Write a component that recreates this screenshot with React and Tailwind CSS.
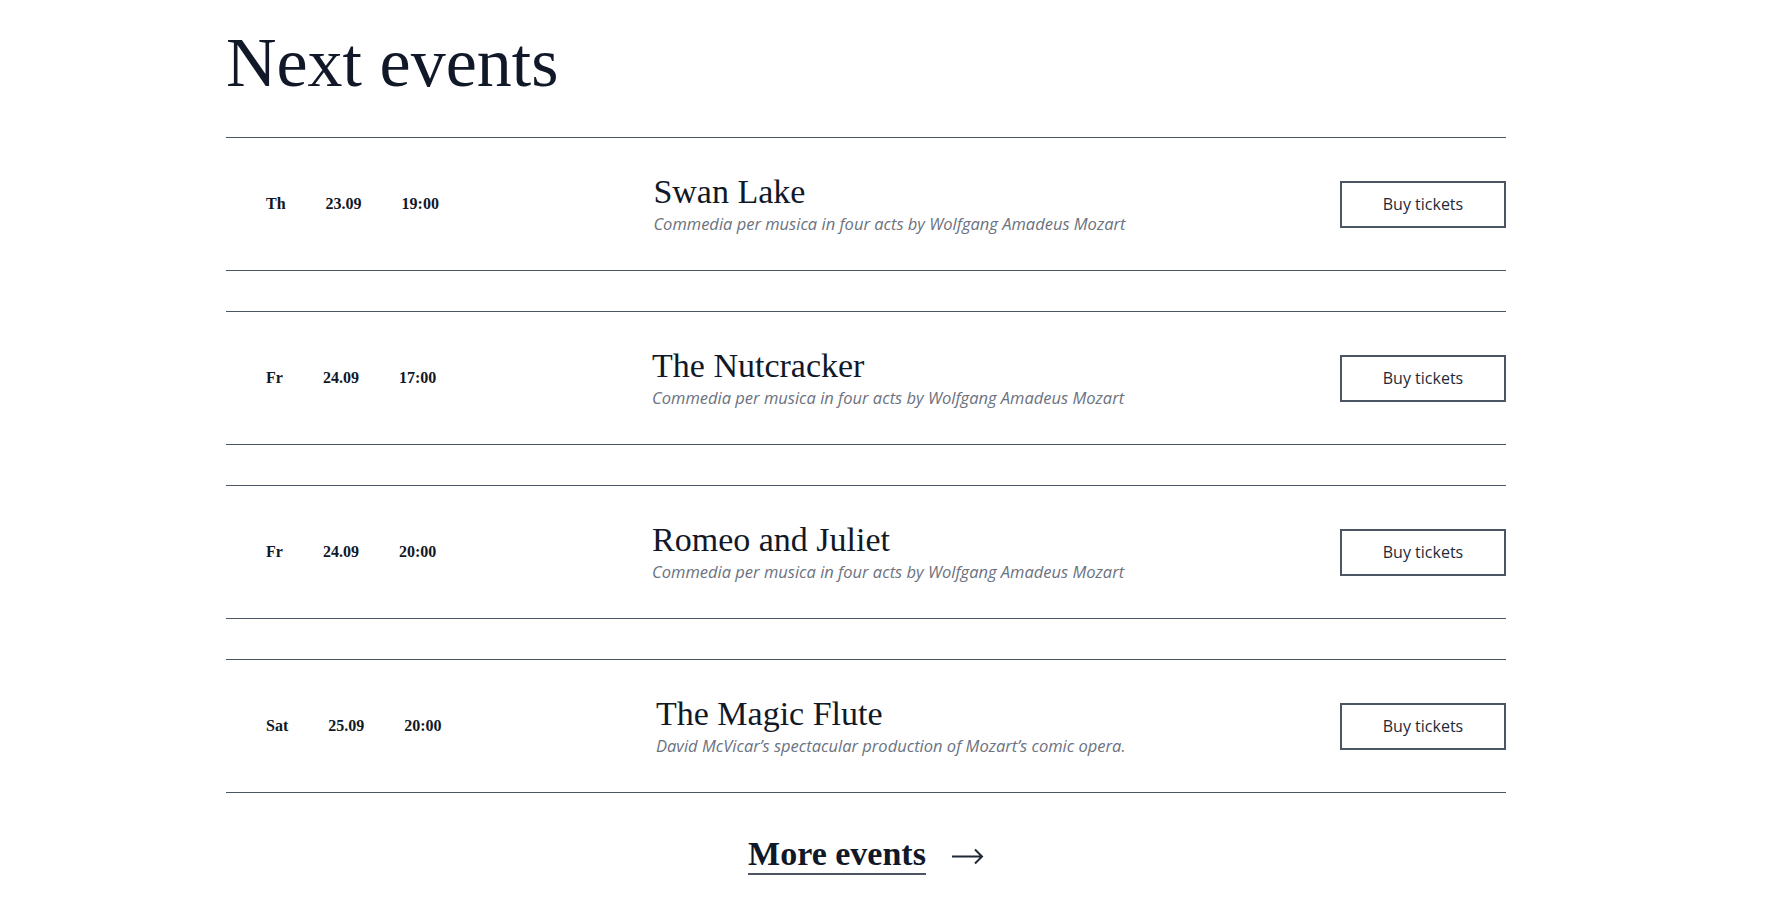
import React from 'react';

const events = [
  {
    day: 'Th',
    date: '23.09',
    time: '19:00',
    title: 'Swan Lake',
    subtitle: 'Commedia per musica in four acts by Wolfgang Amadeus Mozart',
  },
  {
    day: 'Fr',
    date: '24.09',
    time: '17:00',
    title: 'The Nutcracker',
    subtitle: 'Commedia per musica in four acts by Wolfgang Amadeus Mozart',
  },
  {
    day: 'Fr',
    date: '24.09',
    time: '20:00',
    title: 'Romeo and Juliet',
    subtitle: 'Commedia per musica in four acts by Wolfgang Amadeus Mozart',
  },
  {
    day: 'Sat',
    date: '25.09',
    time: '20:00',
    title: 'The Magic Flute',
    subtitle: 'David McVicar\u2019s spectacular production of Mozart\u2019s comic opera.',
  },
];

const serif = "font-['Liberation_Serif',serif]";
const sans = "font-['Open_Sans','Lato',sans-serif]";

const EventRow = ({ event }) => (
  <div className="flex h-[134px] items-center justify-between border-y border-[#4b5563]">
    {/* Date / time */}
    <div className={`flex gap-10 pl-10 text-base font-bold text-[#111827] ${serif}`}>
      <span>{event.day}</span>
      <span>{event.date}</span>
      <span>{event.time}</span>
    </div>

    {/* Title */}
    <div className="flex flex-col">
      <h3 className={`text-[34px] leading-[40px] text-[#111827] ${serif}`}>{event.title}</h3>
      <p className={`text-[16.5px] leading-6 italic text-[#6b7280] ${sans}`}>{event.subtitle}</p>
    </div>

    {/* Action */}
    <button
      className={`flex h-[47px] w-[166px] items-center justify-center border-2 border-[#4b5563] text-base text-[#1f2937] ${sans}`}
    >
      Buy tickets
    </button>
  </div>
);

const App = () => {
  return (
    <div className="min-h-screen bg-white pl-[226px]">
      <div className="w-[1280px]">
        <h1 className={`pt-[28px] text-[70px] leading-none text-[#111827] ${serif}`}>Next events</h1>

        <div className="mt-[39px] flex flex-col gap-10">
          {events.map((event, i) => (
            <EventRow key={i} event={event} />
          ))}
        </div>

        <div className="mt-[44px] flex justify-center">
          <a href="#" className="flex items-center gap-[25px] text-[#111827]">
            <span className={`border-b-2 border-[#4b5563] pb-[2px] text-[34px] leading-none font-semibold ${serif}`}>
              More events
            </span>
            <svg width="33" height="17" viewBox="0 0 33 17" fill="none" stroke="#1f2937" strokeWidth="2">
              <path d="M1 8.5 H31 M24 1.5 L31 8.5 L24 15.5" />
            </svg>
          </a>
        </div>
      </div>
    </div>
  );
};

export default App;
